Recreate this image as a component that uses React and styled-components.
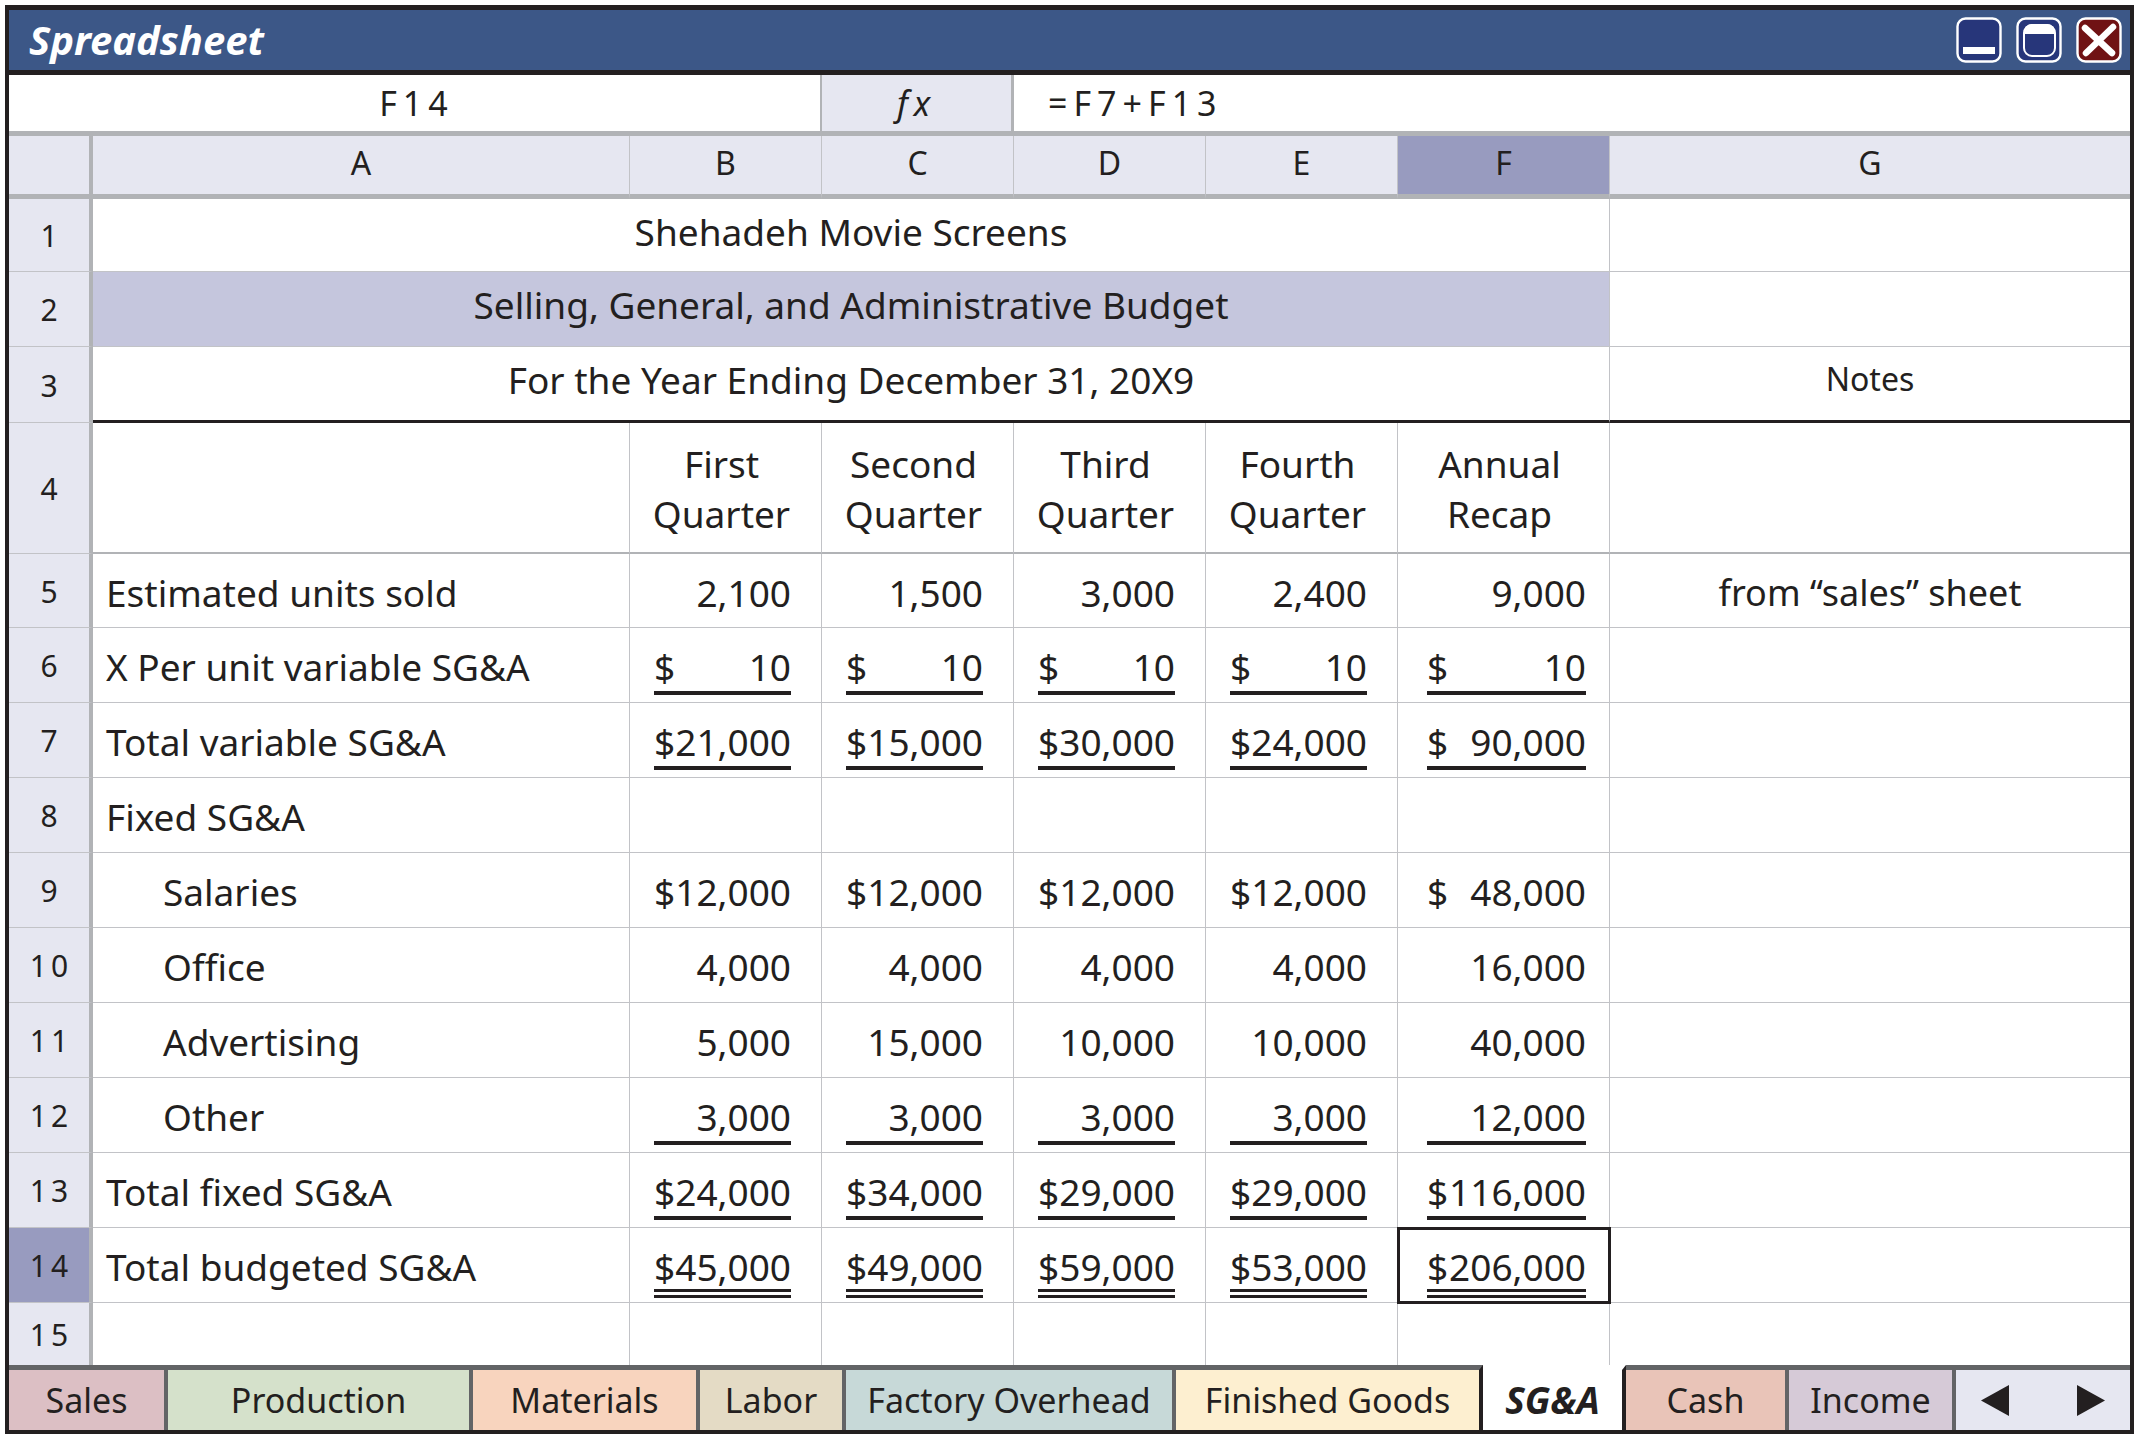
import React, { Component } from 'react';
import styled, { createGlobalStyle, css } from 'styled-components';

const ink = '#231f20';
const line = '#c2c3c7';
const heavyLine = '#b1b3b6';
const tabLine = '#636466';
const lavender = '#e6e7f1';
const selected = '#989bbf';

const GlobalStyle = createGlobalStyle`
  * {
    box-sizing: border-box;
  }
  body {
    margin: 0;
    background: white;
    color: ${ink};
    font-family: 'Noto Sans', 'Open Sans', sans-serif;
    font-size: 37px;
  }
  button,
  input {
    font: inherit;
    color: inherit;
    border: 0;
    border-radius: 0;
    padding: 0;
  }
`;

const Window = styled.main`
  margin: 5px 7px 5px 5px;
  border: 4px solid ${ink};
  border-top-width: 5px;
`;

const TitleBar = styled.header`
  display: flex;
  align-items: center;
  justify-content: space-between;
  height: 65px;
  padding: 0 8px 0 20px;
  background: #3c5787;
  border-bottom: 5px solid ${ink};
`;

const Title = styled.h1`
  margin: 0;
  color: white;
  font-size: 40px;
  font-style: italic;
  line-height: 48px;
`;

const WindowButtons = styled.div`
  display: flex;
  gap: 14px;
`;

const WindowButton = styled.button`
  display: flex;
  width: 46px;
  height: 46px;
  background: none;
  cursor: pointer;
`;

const FormulaBar = styled.div`
  display: grid;
  grid-template-columns: 811px 194px 1fr;
  height: 61px;
  border-bottom: 5px solid ${heavyLine};
`;

const FormulaInput = styled.input`
  min-width: 0;
  padding-left: ${props => (props.$center ? '4px' : '34px')};
  background: white;
  font-size: 34px;
  letter-spacing: 6px;
  text-align: ${props => (props.$center ? 'center' : 'left')};
`;

const FunctionButton = styled.button`
  background: ${lavender};
  border: solid ${heavyLine};
  border-width: 0 3px 0 2px;
  font-size: 34px;
  font-style: italic;
  letter-spacing: 6px;
`;

const Sheet = styled.table`
  width: 100%;
  table-layout: fixed;
  border-collapse: separate;
  border-spacing: 0;
`;

const Col = styled.col`
  width: ${props => props.$width};
`;

const ColumnHeader = styled.th`
  height: 63px;
  padding: 0 0 4px;
  background: ${props => (props.$selected ? selected : lavender)};
  border-right: 1px solid ${line};
  border-bottom: 5px solid ${heavyLine};
  font-size: 32px;
  font-weight: 400;
  line-height: 40px;
  &:first-child {
    border-right: 4px solid ${heavyLine};
  }
  &:last-child {
    border-right: 0;
  }
`;

const RowHeader = styled.th`
  padding: 2px 0 0 4px;
  background: ${props => (props.$selected ? selected : lavender)};
  border-right: 4px solid ${heavyLine};
  border-bottom: 1px solid ${line};
  font-size: 30px;
  font-weight: 400;
  letter-spacing: 4px;
  line-height: 40px;
`;

const Cell = styled.td`
  padding: 0;
  border-right: 1px solid ${line};
  border-bottom: 1px solid ${line};
  line-height: 48px;
  vertical-align: top;
  &:last-child {
    border-right: 0;
  }
`;

const Row = styled.tr`
  height: ${props => props.$height || 75}px;
  ${props =>
    props.$rule &&
    css`
      ${Cell} {
        border-bottom: ${props.$rule};
      }
    `}
  &:last-child ${Cell}, &:last-child ${RowHeader} {
    border-bottom: 0;
  }
`;

const Heading = styled(Cell)`
  padding-top: 9px;
  background: ${props => (props.$shaded ? '#c5c6dd' : 'white')};
  text-align: center;
`;

const Note = styled(Cell)`
  padding-top: ${props => (props.$small ? '8px' : '15px')};
  font-size: ${props => (props.$small ? '32px' : '36px')};
  text-align: center;
`;

const QuarterCell = styled(Cell)`
  padding: 16px 8px 0 0;
  line-height: 50px;
  text-align: center;
`;

const Label = styled(Cell)`
  padding-top: 15px;
  padding-left: ${props => (props.$indent ? '70px' : '13px')};
`;

const AmountCell = styled(Cell)`
  padding: ${props => (props.$wide ? '0 23px 0 29px' : '0 30px 0 24px')};
  ${props =>
    props.$active &&
    css`
      outline: 3px solid ${ink};
      outline-offset: -2px;
    `}
`;

const underlines = {
  single: css`
    border-bottom: 4px solid ${ink};
  `,
  double: css`
    padding-top: 17px;
    line-height: 44px;
    border-bottom: 9px double ${ink};
  `
};

const Amount = styled.div`
  display: flex;
  justify-content: space-between;
  padding-top: 15px;
  ${props => underlines[props.$underline]}
`;

const Tabs = styled.nav`
  display: grid;
  grid-template-columns: ${props => props.$columns};
  height: 65px;
`;

const Tab = styled.button`
  min-width: 0;
  background: ${props => props.$color};
  border-top: 5px solid ${tabLine};
  border-right: 4px solid ${tabLine};
  font-size: 34px;
  line-height: 48px;
  white-space: nowrap;
  cursor: pointer;
  &:has(+ [aria-current]) {
    border-right-color: ${ink};
  }
  &[aria-current] {
    border-top-color: white;
    border-right-color: ${ink};
    font-size: 37px;
    font-style: italic;
    font-weight: 700;
  }
`;

const Scroller = styled.div`
  display: flex;
  align-items: center;
  justify-content: space-between;
  padding: 0 25px;
  background: ${lavender};
  border-top: 5px solid ${tabLine};
`;

const Arrow = styled.button`
  display: flex;
  background: none;
  cursor: pointer;
`;

const columns = ['A', 'B', 'C', 'D', 'E', 'F', 'G'];

const quarters = [
  ['First', 'Quarter'],
  ['Second', 'Quarter'],
  ['Third', 'Quarter'],
  ['Fourth', 'Quarter'],
  ['Annual', 'Recap']
];

const rows = [
  {
    label: 'Estimated units sold',
    values: ['2,100', '1,500', '3,000', '2,400', '9,000'],
    note: 'from “sales” sheet',
    height: 74
  },
  {
    label: 'X Per unit variable SG&A',
    values: ['$10', '$10', '$10', '$10', '$10'],
    underline: 'single'
  },
  {
    label: 'Total variable SG&A',
    values: ['$21,000', '$15,000', '$30,000', '$24,000', '$90,000'],
    underline: 'single'
  },
  { label: 'Fixed SG&A', values: ['', '', '', '', ''] },
  {
    label: 'Salaries',
    values: ['$12,000', '$12,000', '$12,000', '$12,000', '$48,000'],
    indent: true
  },
  {
    label: 'Office',
    values: ['4,000', '4,000', '4,000', '4,000', '16,000'],
    indent: true
  },
  {
    label: 'Advertising',
    values: ['5,000', '15,000', '10,000', '10,000', '40,000'],
    indent: true
  },
  {
    label: 'Other',
    values: ['3,000', '3,000', '3,000', '3,000', '12,000'],
    indent: true,
    underline: 'single'
  },
  {
    label: 'Total fixed SG&A',
    values: ['$24,000', '$34,000', '$29,000', '$29,000', '$116,000'],
    underline: 'single'
  },
  {
    label: 'Total budgeted SG&A',
    values: ['$45,000', '$49,000', '$59,000', '$53,000', '$206,000'],
    underline: 'double'
  },
  { label: '', values: ['', '', '', '', ''], height: 62 }
];

const tabs = [
  { name: 'Sales', size: 159, color: '#dcbfc4' },
  { name: 'Production', size: 305, color: '#d5e1cb' },
  { name: 'Materials', size: 227, color: '#f8d4be' },
  { name: 'Labor', size: 146, color: '#e4dbc5' },
  { name: 'Factory Overhead', size: 330, color: '#c7d9d8' },
  { name: 'Finished Goods', size: 307, color: '#fdefd0' },
  { name: 'SG&A', size: 143, color: 'white' },
  { name: 'Cash', size: 163, color: '#e9c4b8' },
  { name: 'Income', size: 167, color: '#d6cad7' }
];

const tabColumns = [...tabs.map(tab => tab.size), 174]
  .map(size => `${size}fr`)
  .join(' ');

const MinimizeIcon = () => (
  <svg width="46" height="46" viewBox="0 0 46 46">
    <rect x="1.5" y="1.5" width="43" height="43" rx="8" fill="#27367a" stroke="white" strokeWidth="2.4" />
    <rect x="7" y="30" width="32" height="7" fill="white" />
  </svg>
);

const MaximizeIcon = () => (
  <svg width="46" height="46" viewBox="0 0 46 46">
    <rect x="1.5" y="1.5" width="43" height="43" rx="8" fill="#27367a" stroke="white" strokeWidth="2.4" />
    <rect x="8" y="8" width="31" height="31" rx="8" fill="none" stroke="white" strokeWidth="2" />
    <path d="M8 17v-2a8 8 0 0 1 8-8h15a8 8 0 0 1 8 8v2z" fill="white" />
  </svg>
);

const CloseIcon = () => (
  <svg width="46" height="46" viewBox="0 0 46 46">
    <rect x="1.5" y="1.5" width="43" height="43" rx="8" fill="#701214" stroke="white" strokeWidth="2.4" />
    <path d="M9 11L36 36M37 10L10 36" stroke="white" strokeWidth="6.5" strokeLinecap="round" />
  </svg>
);

const splitAmount = value =>
  value.startsWith('$') ? ['$', value.slice(1)] : ['', value];

export default class App extends Component {
  state = { name: 'F14', formula: '=F7+F13' };

  handleChange = event => {
    this.setState({ [event.target.name]: event.target.value });
  };

  render() {
    const { name, formula } = this.state;

    return (
      <React.Fragment>
        <GlobalStyle />
        <Window>
          <TitleBar>
            <Title>Spreadsheet</Title>
            <WindowButtons>
              <WindowButton aria-label="Minimize">
                <MinimizeIcon />
              </WindowButton>
              <WindowButton aria-label="Maximize">
                <MaximizeIcon />
              </WindowButton>
              <WindowButton aria-label="Close">
                <CloseIcon />
              </WindowButton>
            </WindowButtons>
          </TitleBar>
          <FormulaBar>
            <FormulaInput
              $center
              aria-label="Cell"
              name="name"
              value={name}
              onChange={this.handleChange}
            />
            <FunctionButton>fx</FunctionButton>
            <FormulaInput
              aria-label="Formula"
              name="formula"
              value={formula}
              onChange={this.handleChange}
            />
          </FormulaBar>
          <Sheet>
            <colgroup>
              <Col $width="84px" />
              <Col $width="537px" />
              <Col $width="192px" />
              <Col $width="192px" />
              <Col $width="192px" />
              <Col $width="192px" />
              <Col $width="212px" />
              <Col $width="auto" />
            </colgroup>
            <thead>
              <tr>
                <ColumnHeader />
                {columns.map(column => (
                  <ColumnHeader key={column} scope="col" $selected={column === 'F'}>
                    {column}
                  </ColumnHeader>
                ))}
              </tr>
            </thead>
            <tbody>
              <Row $height={73}>
                <RowHeader scope="row">1</RowHeader>
                <Heading colSpan={6}>Shehadeh Movie Screens</Heading>
                <Cell />
              </Row>
              <Row>
                <RowHeader scope="row">2</RowHeader>
                <Heading colSpan={6} $shaded>
                  Selling, General, and Administrative Budget
                </Heading>
                <Cell />
              </Row>
              <Row $height={76} $rule={`3px solid ${ink}`}>
                <RowHeader scope="row">3</RowHeader>
                <Heading colSpan={6}>For the Year Ending December 31, 20X9</Heading>
                <Note $small>Notes</Note>
              </Row>
              <Row $height={131} $rule={`2px solid ${heavyLine}`}>
                <RowHeader scope="row">4</RowHeader>
                <Cell />
                {quarters.map(([first, second]) => (
                  <QuarterCell key={first}>
                    {first}
                    <br />
                    {second}
                  </QuarterCell>
                ))}
                <Cell />
              </Row>
              {rows.map((row, index) => (
                <Row key={index} $height={row.height}>
                  <RowHeader scope="row" $selected={index === 9}>
                    {index + 5}
                  </RowHeader>
                  <Label $indent={row.indent}>{row.label}</Label>
                  {row.values.map((value, i) => {
                    const [sign, digits] = splitAmount(value);
                    return (
                      <AmountCell key={i} $wide={i === 4} $active={index === 9 && i === 4}>
                        {value && (
                          <Amount $underline={row.underline}>
                            <span>{sign}</span>
                            <span>{digits}</span>
                          </Amount>
                        )}
                      </AmountCell>
                    );
                  })}
                  <Note>{row.note}</Note>
                </Row>
              ))}
            </tbody>
          </Sheet>
          <Tabs $columns={tabColumns}>
            {tabs.map(tab => (
              <Tab
                key={tab.name}
                $color={tab.color}
                aria-current={tab.name === 'SG&A' ? 'page' : undefined}
              >
                {tab.name}
              </Tab>
            ))}
            <Scroller>
              <Arrow aria-label="Previous sheets">
                <svg width="28" height="31" viewBox="0 0 28 31">
                  <path d="M28 0v31L0 15.500z" fill={ink} />
                </svg>
              </Arrow>
              <Arrow aria-label="Next sheets">
                <svg width="28" height="31" viewBox="0 0 28 31">
                  <path d="M0 0v31l28-15.500z" fill={ink} />
                </svg>
              </Arrow>
            </Scroller>
          </Tabs>
        </Window>
      </React.Fragment>
    );
  }
}
